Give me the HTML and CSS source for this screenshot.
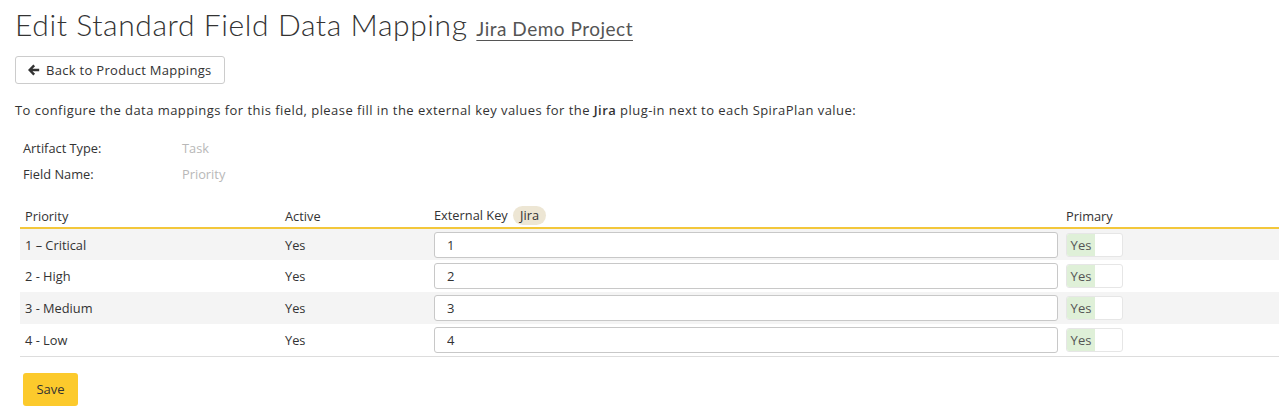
FILE: index.html
```html
<!DOCTYPE html>
<html>
<head>
<meta charset="utf-8">
<link rel="stylesheet" href="styles.css">
</head>
<body>
<div class="page">
  <h1 class="title">Edit Standard Field Data Mapping <a class="proj" href="#">Jira Demo Project</a></h1>
  <button class="btn-back"><svg class="arrow" viewBox="0 0 12 12" width="12" height="12"><path d="M6.2 1.3 L1.6 6 L6.2 10.7 M1.8 6 H11.2" fill="none" stroke="#333" stroke-width="2.4" stroke-linejoin="miter"/></svg>Back to Product Mappings</button>
  <p class="intro">To configure the data mappings for this field, please fill in the external key values for the <b>Jira</b> plug-in next to each SpiraPlan value:</p>
  <div class="meta">
    <div class="meta-row"><span class="meta-label">Artifact Type:</span><span class="meta-val">Task</span></div>
    <div class="meta-row"><span class="meta-label">Field Name:</span><span class="meta-val">Priority</span></div>
  </div>
  <table class="grid">
    <thead>
      <tr><th class="c1">Priority</th><th class="c2">Active</th><th class="c3">External Key <span class="badge">Jira</span></th><th class="c4">Primary</th></tr>
    </thead>
    <tbody>
      <tr><td>1 – Critical</td><td>Yes</td><td><input class="key" value="1"></td><td><span class="tog"><span class="tog-on">Yes</span><span class="tog-off"></span></span></td></tr>
      <tr><td>2 - High</td><td>Yes</td><td><input class="key" value="2"></td><td><span class="tog"><span class="tog-on">Yes</span><span class="tog-off"></span></span></td></tr>
      <tr><td>3 - Medium</td><td>Yes</td><td><input class="key" value="3"></td><td><span class="tog"><span class="tog-on">Yes</span><span class="tog-off"></span></span></td></tr>
      <tr><td>4 - Low</td><td>Yes</td><td><input class="key" value="4"></td><td><span class="tog"><span class="tog-on">Yes</span><span class="tog-off"></span></span></td></tr>
    </tbody>
  </table>
  <button class="btn-save">Save</button>
</div>
</body>
</html>
```
FILE: styles.css
```css
* { box-sizing: border-box; }
body { margin: 0; background: #fff; font-family: "Open Sans", "DejaVu Sans", sans-serif; font-size: 12.8px; color: #333; }
.page { padding: 0 2px 0 15px; }
.title { margin: 0; padding-top: 7px; height: 48px; font-family: "Lato", sans-serif; font-weight: 300; font-size: 30px; color: #333; letter-spacing: 0.6px; line-height: 34px; white-space: nowrap; }
.proj { font-size: 19px; color: #555; font-weight: 400; letter-spacing: 0.5px; text-decoration: underline; text-underline-offset: 4px; }
.btn-back { display: flex; align-items: center; gap: 6px; margin-top: 8px; height: 28px; width: 210px; padding: 0 12px; border: 1px solid #ccc; border-radius: 3px; background: #fff; font-family: inherit; font-size: 13px; letter-spacing: 0.3px; color: #333; }
.arrow { flex: none; }
.intro { margin: 17px 0 0; line-height: 18px; font-size: 13px; letter-spacing: 0.45px; }
.intro b { font-weight: 600; }
.meta { margin: 16px 0 0 8px; }
.meta-row { display: flex; height: 26px; align-items: center; }
.meta-label { width: 159px; }
.meta-val { color: #b8b8b8; }
.grid { margin: 15px 0 0 5px; width: calc(100% - 5px); border-collapse: collapse; }
.grid th { text-align: left; font-weight: 400; height: 26px; padding: 2px 0 0 5px; border-bottom: 2px solid #f3c73b; vertical-align: middle; }
.grid td { height: 32px; padding: 0 0 0 5px; vertical-align: middle; }
.grid tbody tr:nth-child(odd) { background: #f4f4f4; }
.grid tbody tr:last-child td { border-bottom: 1px solid #ddd; }
.c1 { width: 260px; }
.c2 { width: 149px; }
.c3 { width: 632px; }
.badge { display: inline-block; padding: 0 7px; height: 19px; line-height: 19px; border-radius: 10px; background: #ede6d4; margin-left: 2px; }
.key { display: block; width: 624px; height: 26px; border: 1px solid #c8c8c8; border-radius: 3px; padding: 0 12px; font-family: inherit; font-size: 13px; color: #333; background: #fff; }
.tog { display: inline-flex; height: 24px; width: 57px; border: 1px solid #e6e6e6; border-radius: 3px; overflow: hidden; background: #fff; }
.tog-on { background: #dff0d8; width: 28px; display: flex; align-items: center; justify-content: center; color: #555; font-size: 13px; }
.tog-off { flex: 1; }
.btn-save { margin: 16px 0 0 8px; height: 33px; width: 55px; border: none; border-radius: 3px; background: #fcca2c; font-family: inherit; font-size: 13px; color: #333; }
```
